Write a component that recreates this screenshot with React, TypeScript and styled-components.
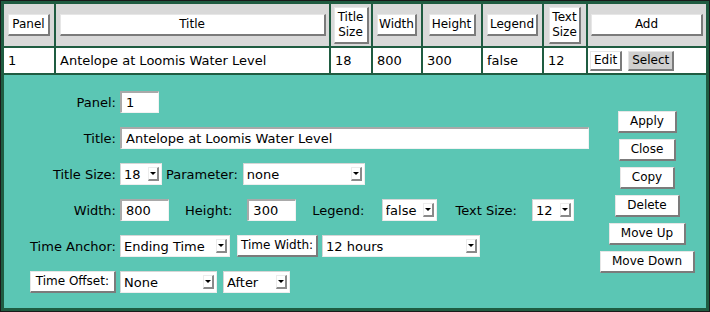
import React from "react";
import styled, { createGlobalStyle } from "styled-components";

const GREEN = "#1f5c41";
const TEAL = "#5bc6b4";
const HEAD = "#d9d9d9";

const Global = createGlobalStyle`
  html, body { margin: 0; padding: 0; background: #fff; }
  body {
    font-family: "DejaVu Sans", "Liberation Sans", sans-serif;
    font-size: 13px;
    color: #000;
  }
`;

const Frame = styled.div`
  box-sizing: border-box;
  width: 710px;
  height: 312px;
  border: 1px solid #1a1a1a;
  padding: 3px;
  background: ${GREEN};
`;

const Table = styled.div`
  display: grid;
  grid-template-columns: 50px 273px 40px 48px 58px 59px 42px 118px;
  grid-template-rows: 42px 25px 1fr;
  gap: 2px;
  height: 100%;
`;

const HeadCell = styled.div`
  background: ${HEAD};
  display: flex;
  align-items: center;
  justify-content: center;
`;

const DataCell = styled.div<{ $pl?: number }>`
  background: #fff;
  display: flex;
  align-items: center;
  padding-left: ${(p) => p.$pl ?? 4}px;
  gap: 6px;
  white-space: nowrap;
`;

const Btn = styled.button<{ $w?: number; $pressed?: boolean; $px?: number }>`
  box-sizing: border-box;
  flex-shrink: 0;
  font-family: inherit;
  font-size: 12px;
  line-height: 15px;
  color: #000;
  background: ${(p) => (p.$pressed ? "#cfcfcf" : "#fff")};
  border-style: solid;
  border-width: 1px 2px 2px 1px;
  border-color: #e6e6e6 #7b7b7b #7b7b7b #e6e6e6;
  padding: 2px ${(p) => p.$px ?? 3}px;
  margin: 0;
  white-space: nowrap;
  text-align: center;
  cursor: default;
  width: ${(p) => (p.$w ? `${p.$w}px` : "auto")};
`;

const HeadBtn = styled(Btn)`
  padding: 2px 0;
`;

const SmallBtn = styled(Btn)`
  padding: 1px 3px;
`;

const SideBtn = styled(Btn)`
  padding: 2px 11px;
`;

const FormBtn = styled(Btn)<{ $ml?: number; $mr?: number }>`
  margin-left: ${(p) => p.$ml ?? 0}px;
  margin-right: ${(p) => p.$mr ?? 0}px;
`;

const Detail = styled.div`
  grid-column: 1 / -1;
  background: ${TEAL};
  display: grid;
  grid-template-columns: 585px 1fr;
`;

const Form = styled.div`
  display: flex;
  flex-direction: column;
  gap: 14px;
  padding-top: 16px;
`;

const Row = styled.div`
  display: flex;
  align-items: center;
  height: 22px;
`;

const FieldLabel = styled.label`
  box-sizing: border-box;
  flex-shrink: 0;
  width: 116px;
  padding-right: 4px;
  display: flex;
  justify-content: flex-end;
  white-space: nowrap;
`;

const InlineLabel = styled.label<{ $ml?: number; $mr?: number }>`
  flex-shrink: 0;
  margin-left: ${(p) => p.$ml ?? 0}px;
  margin-right: ${(p) => p.$mr ?? 0}px;
  white-space: nowrap;
`;

const TextInput = styled.input<{ $w: number }>`
  box-sizing: border-box;
  flex-shrink: 0;
  width: ${(p) => p.$w}px;
  height: 22px;
  font-family: inherit;
  font-size: 13px;
  color: #000;
  background: #fff;
  border-style: solid;
  border-width: 2px 1px 1px 2px;
  border-color: #a9a9a9 #f2f2f2 #f2f2f2 #a9a9a9;
  padding: 0 4px;
  margin: 0;
  outline: none;
`;

const SelectBox = styled.div<{ $w: number; $ml?: number }>`
  box-sizing: border-box;
  flex-shrink: 0;
  width: ${(p) => p.$w}px;
  height: 22px;
  margin-left: ${(p) => p.$ml ?? 0}px;
  background: #fff;
  border-style: solid;
  border-width: 1px;
  border-color: #d6d6d6 #eeeeee #eeeeee #d6d6d6;
  display: flex;
  align-items: center;
`;

const NativeSelect = styled.select`
  appearance: none;
  -webkit-appearance: none;
  flex: 1;
  min-width: 0;
  border: none;
  background: transparent;
  font-family: inherit;
  font-size: 13px;
  color: #000;
  padding: 0 0 0 3px;
  margin: 0;
  outline: none;
`;

const Arrow = styled.span`
  box-sizing: border-box;
  width: 11px;
  height: 14px;
  margin-right: 2px;
  background: #fff;
  border-style: solid;
  border-width: 1px 2px 2px 1px;
  border-color: #ececec #8a8a8a #8a8a8a #ececec;
  display: flex;
  align-items: center;
  justify-content: center;
  &::after {
    content: "";
    width: 0;
    height: 0;
    border-left: 3px solid transparent;
    border-right: 3px solid transparent;
    border-top: 3px solid #000;
  }
`;

const Side = styled.div`
  display: flex;
  flex-direction: column;
  align-items: center;
  justify-content: center;
  gap: 6px;
`;

function Select({ w, ml, value }: { w: number; ml?: number; value: string }) {
  return (
    <SelectBox $w={w} $ml={ml}>
      <NativeSelect defaultValue={value}>
        <option value={value}>{value}</option>
      </NativeSelect>
      <Arrow />
    </SelectBox>
  );
}

export default function App() {
  return (
    <>
      <Global />
      <Frame>
        <Table>
          <HeadCell><HeadBtn $w={42}>Panel</HeadBtn></HeadCell>
          <HeadCell><HeadBtn $w={266}>Title</HeadBtn></HeadCell>
          <HeadCell><HeadBtn $w={35}>Title<br />Size</HeadBtn></HeadCell>
          <HeadCell><HeadBtn $w={40}>Width</HeadBtn></HeadCell>
          <HeadCell><HeadBtn $w={47}>Height</HeadBtn></HeadCell>
          <HeadCell><HeadBtn $w={51}>Legend</HeadBtn></HeadCell>
          <HeadCell><HeadBtn $w={32}>Text<br />Size</HeadBtn></HeadCell>
          <HeadCell><HeadBtn $w={112}>Add</HeadBtn></HeadCell>

          <DataCell>1</DataCell>
          <DataCell>Antelope at Loomis Water Level</DataCell>
          <DataCell>18</DataCell>
          <DataCell>800</DataCell>
          <DataCell>300</DataCell>
          <DataCell>false</DataCell>
          <DataCell>12</DataCell>
          <DataCell $pl={2}>
            <SmallBtn>Edit</SmallBtn>
            <SmallBtn $pressed>Select</SmallBtn>
          </DataCell>

          <Detail>
            <Form>
              <Row>
                <FieldLabel>Panel:</FieldLabel>
                <TextInput $w={39} defaultValue="1" />
              </Row>
              <Row>
                <FieldLabel>Title:</FieldLabel>
                <TextInput $w={469} defaultValue="Antelope at Loomis Water Level" />
              </Row>
              <Row>
                <FieldLabel>Title Size:</FieldLabel>
                <Select w={42} value="18" />
                <InlineLabel $ml={4} $mr={5}>Parameter:</InlineLabel>
                <Select w={122} value="none" />
              </Row>
              <Row>
                <FieldLabel>Width:</FieldLabel>
                <TextInput $w={49} defaultValue="800" />
                <InlineLabel $ml={16} $mr={15}>Height:</InlineLabel>
                <TextInput $w={49} defaultValue="300" />
                <InlineLabel $ml={16} $mr={17}>Legend:</InlineLabel>
                <Select w={55} value="false" />
                <InlineLabel $ml={19} $mr={15}>Text Size:</InlineLabel>
                <Select w={42} value="12" />
              </Row>
              <Row>
                <FieldLabel>Time Anchor:</FieldLabel>
                <Select w={110} value="Ending Time" />
                <FormBtn $ml={7} $mr={4} $px={3}>Time Width:</FormBtn>
                <Select w={158} value="12 hours" />
              </Row>
              <Row>
                <FieldLabel><FormBtn $px={5}>Time Offset:</FormBtn></FieldLabel>
                <Select w={97} value="None" />
                <Select w={67} ml={6} value="After" />
              </Row>
            </Form>
            <Side>
              <SideBtn>Apply</SideBtn>
              <SideBtn>Close</SideBtn>
              <SideBtn>Copy</SideBtn>
              <SideBtn>Delete</SideBtn>
              <SideBtn>Move Up</SideBtn>
              <SideBtn>Move Down</SideBtn>
            </Side>
          </Detail>
        </Table>
      </Frame>
    </>
  );
}
